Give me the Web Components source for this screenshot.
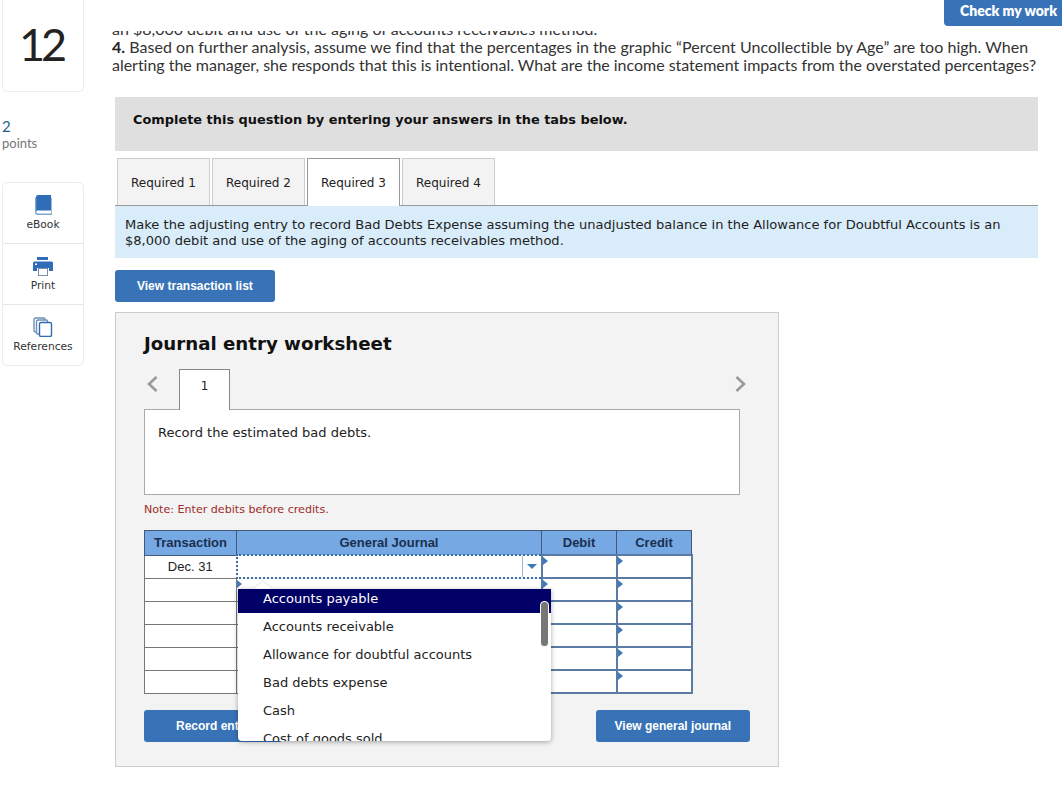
<!DOCTYPE html>
<html>
<head>
<meta charset="utf-8">
<title>Journal entry worksheet</title>
<style>
  html, body { margin: 0; padding: 0; background: #fff; }
  body { width: 1062px; height: 786px; overflow: hidden; position: relative; }
</style>
</head>
<body>
<quiz-page></quiz-page>

<script>
(function() {
  // small helper, every element is the same shape: style + markup in an open root
  function define(name, css, html) {
    customElements.define(name, class extends HTMLElement {
      constructor() {
        super();
        this.attachShadow({ mode: "open" });
        const template = document.createElement("template");
        template.innerHTML = "<style>" + css + "</style>" + html;
        this.shadowRoot.appendChild(template.content.cloneNode(true));
      }
    });
  }

  const VERDANA = '"DejaVu Sans", Verdana, sans-serif';
  const ARIAL = '"Liberation Sans", Arial, sans-serif';
  const PROXIMA = 'Lato, "Open Sans", sans-serif';

  define("action-button", `
    :host { display: inline-flex; }
    div {
      display: flex; align-items: center; justify-content: center;
      height: 32px; box-sizing: border-box;
      padding: 0 var(--pad, 22px);
      background: #3873b8; color: #fff; border-radius: 3px;
      font: bold 12px ${ARIAL};
    }
  `, `<div><slot></slot></div>`);

  define("tool-item", `
    :host {
      display: flex; flex-direction: column; align-items: center;
      height: 61px; box-sizing: border-box; padding-top: 12px;
      border-bottom: 1px solid #e6e6e6;
      color: #333;
    }
    :host(:last-child) { border-bottom: 0; }
    .icon { height: 20px; display: flex; }
    .label { margin-top: 3px; font: 10.700px/14px ${VERDANA}; }
  `, `<div class="icon"><slot name="icon"></slot></div><div class="label"><slot></slot></div>`);

  define("side-rail", `
    :host { display: block; width: 82px; margin-left: 2px; font-family: ${PROXIMA}; }
    .num {
      height: 92px; box-sizing: border-box;
      border: 1px solid #ececec; border-top: 0; border-radius: 0 0 5px 5px;
      display: flex; align-items: center; justify-content: center;
      font-size: 45px; font-weight: 400; color: #222; letter-spacing: -4px; padding: 0 4px 3px 0;
    }
    .pts { margin-top: 26px; height: 64px; color: #777; font-size: 13px; line-height: 17px; }
    .pts b { display: block; font-weight: 400; color: #1f5f8b; font-size: 15px; }
    .tools { border: 1px solid #ececec; border-radius: 5px; height: 184px; box-sizing: border-box; }
  `, `
    <div class="num">12</div>
    <div class="pts"><b>2</b>points</div>
    <div class="tools">
      <tool-item>
        <svg slot="icon" width="20" height="20" viewBox="0 0 20 20">
          <path d="M3 2.200C3 1 3.800 0 5 0h13v15.500H5c-1.200 0-2 .6-2 1.500z" fill="#2f6db8"/>
          <path d="M2 2.500v15C2 19 3 20 4.500 20H19V3h-.8v15.400H5c-1 0-1.700-.5-1.700-1.400V2.500z" fill="#7fa6d3"/>
        </svg>
        eBook
      </tool-item>
      <tool-item>
        <svg slot="icon" width="20" height="19" viewBox="0 0 20 19" style="margin-top:1px">
          <rect x="4" y="0" width="11" height="3" fill="#2f6db8"/>
          <path d="M1.500 4.500h17A1.500 1.500 0 0 1 20 6v8h-4v-3H4v3H0V6a1.500 1.500 0 0 1 1.500-1.500z" fill="#2f6db8"/>
          <rect x="2" y="6.500" width="2" height="1.500" fill="#fff"/>
          <rect x="5.500" y="11.500" width="9" height="7" fill="#fff" stroke="#7d8fa6"/>
        </svg>
        Print
      </tool-item>
      <tool-item>
        <svg slot="icon" width="20" height="20" viewBox="0 0 20 20" fill="#fff" stroke="#6f8fb5" stroke-width="1.400">
          <rect x="1" y="1" width="11" height="14" rx="1.500"/>
          <rect x="3.500" y="3" width="11" height="14" rx="1.500"/>
          <rect x="6.500" y="5.500" width="12" height="14" rx="1.500" stroke="#2f6db8"/>
        </svg>
        References
      </tool-item>
    </div>
  `);

  define("question-text", `
    :host {
      display: flex; flex-direction: column; justify-content: flex-end;
      height: 43px; overflow: hidden; margin: 31px 0 23px -3px;
      font: 16px/18px ${PROXIMA}; color: #333;
    }
    p { margin: 0; white-space: nowrap; flex: none; }
    b { color: #222; }
    .a { letter-spacing: .03px; }
    .b { letter-spacing: -.023px; }
  `, `
    <p>an $8,000 debit and use of the aging of accounts receivables method.</p>
    <p class="a"><b>4.</b> Based on further analysis, assume we find that the percentages in the graphic “Percent Uncollectible by Age” are too high. When</p>
    <p class="b">alerting the manager, she responds that this is intentional. What are the income statement impacts from the overstated percentages?</p>
  `);

  define("req-tabs", `
    :host { display: block; }
    .row {
      display: flex; gap: 2px; height: 48px; box-sizing: border-box;
      padding-left: 2px; border-bottom: 1px solid #999;
    }
    .tab {
      width: 93px; height: 47px; box-sizing: border-box; padding-top: 1px;
      border: 1px solid #ccc; border-bottom: 0;
      background: #f3f3f3; color: #222;
      display: flex; align-items: center; justify-content: center;
      font: 12px ${VERDANA};
    }
    .tab.on { background: #fff; border-color: #999; height: 48px; padding-top: 0; }
  `, `
    <div class="row">
      <div class="tab">Required 1</div>
      <div class="tab">Required 2</div>
      <div class="tab on">Required 3</div>
      <div class="tab">Required 4</div>
    </div>
  `);

  define("account-dropdown", `
    :host {
      position: absolute; left: 94px; top: 59px; z-index: 5;
      width: 313px; height: 152px;
      background: #fff; border-radius: 0 0 4px 4px;
      box-shadow: 0 1px 5px rgba(0,0,0,.35);
      font: 13px ${VERDANA}; color: #222;
    }
    .caret { position: absolute; left: 14px; top: -9px; display: block; }
    .list { height: 152px; overflow: hidden; border-radius: 0 0 4px 4px; }
    .inner { margin-top: -4px; }
    .item { height: 28px; line-height: 28px; padding-left: 25px; }
    .item.sel { background: #000066; color: #fff; }
    .bar {
      position: absolute; left: 302px; top: 12px; width: 9px; height: 46px;
      box-sizing: border-box; background: #777; border: 1px solid #fff; border-radius: 4px;
    }
  `, `
    <svg class="caret" width="22" height="9" viewBox="0 0 22 9"><path d="M1 9 11 .7 21 9z" fill="#fff" stroke="#e2e2e2"/></svg>
    <div class="list"><div class="inner">
      <div class="item sel">Accounts payable</div>
      <div class="item">Accounts receivable</div>
      <div class="item">Allowance for doubtful accounts</div>
      <div class="item">Bad debts expense</div>
      <div class="item">Cash</div>
      <div class="item">Cost of goods sold</div>
    </div></div>
    <div class="bar"></div>
  `);

  const flag = `<i class="flag"></i>`;
  function emptyRow(acct) {
    return `
    <tr>
      <td class="date"></td><td class="acct">${acct}</td>
      <td class="amt">${flag}</td><td class="amt">${flag}</td>
    </tr>`;
  }

  define("journal-table", `
    :host { display: block; position: relative; width: 547px; font: 13px ${ARIAL}; color: #222; }
    table { border-collapse: collapse; table-layout: fixed; width: 547px; }
    th {
      height: 23px; padding: 0; background: #76a9e3; color: #1a2f4f;
      border: 1px solid #44597a; font: bold 13px ${ARIAL};
    }
    td { height: 21px; padding: 0; background: #fff; position: relative; }
    td.date { border: 1px solid #777; text-align: center; }
    td.acct { border: 1px solid #777; }
    td.amt { border: 2px solid #5a7ba3; }
    td.focus { border: 2px dotted #3a6ea5; }
    .flag {
      position: absolute; left: 0; top: 1px; width: 0; height: 0;
      border-left: 5px solid #3f79b8;
      border-top: 4px solid transparent; border-bottom: 4px solid transparent;
    }
    .arrow {
      position: absolute; right: 0; top: 0; bottom: 0; width: 19px;
      display: flex; align-items: center; justify-content: center;
      border-left: 1px solid #9db5d2; box-sizing: border-box;
    }
    .arrow::after {
      content: ""; border-top: 5px solid #3f79b8;
      border-left: 5px solid transparent; border-right: 5px solid transparent;
    }
  `, `
    <table>
      <colgroup><col style="width:92px"><col style="width:305px"><col style="width:75px"><col style="width:75px"></colgroup>
      <tr><th>Transaction</th><th>General Journal</th><th>Debit</th><th>Credit</th></tr>
      <tr>
        <td class="date">Dec. 31</td>
        <td class="acct focus"><span class="arrow"></span></td>
        <td class="amt">${flag}</td><td class="amt">${flag}</td>
      </tr>
      ${emptyRow(flag)}${emptyRow("")}${emptyRow("")}${emptyRow("")}${emptyRow("")}
    </table>
    <account-dropdown></account-dropdown>
  `);

  define("journal-worksheet", `
    :host {
      display: block; width: 664px; height: 455px; box-sizing: border-box;
      margin-top: 10px; padding: 0 28px 0 28px;
      background: #f3f3f3; border: 1px solid #ccc;
      font-family: ${VERDANA}; color: #222;
    }
    h2 { margin: 19px 0 13px; font: bold 18.200px/24px ${VERDANA}; color: #111; white-space: nowrap; }
    .nav { display: flex; align-items: flex-start; height: 41px; position: relative; z-index: 1; }
    .nav svg { flex: none; }
    .prev { margin: 6px 21px 0 2px; }
    .num {
      width: 51px; height: 41px; box-sizing: border-box;
      border: 1px solid #888; border-bottom: 0; background: #fff;
      display: flex; justify-content: center; padding-top: 8px;
      font: 12px/16px ${VERDANA};
    }
    .next { margin: 6px 0 0 auto; position: relative; left: -3px; }
    .desc {
      margin-top: -1px; height: 86px; box-sizing: border-box;
      width: 596px; padding: 15px 13px; background: #fff; border: 1px solid #aaa;
      font: 13px/16px ${VERDANA};
    }
    .note { margin: 8px 0 13px; font: 11.100px/14px ${VERDANA}; color: #a12a2a; }
    .actions { display: flex; justify-content: space-between; margin-top: 16px; }
  `, `
    <h2>Journal entry worksheet</h2>
    <div class="nav">
      <svg class="prev" width="12" height="18" viewBox="0 0 12 18"><path d="M10.500 2 3 9l7.500 7" fill="none" stroke="#999" stroke-width="2.600"/></svg>
      <div class="num">1</div>
      <svg class="next" width="12" height="18" viewBox="0 0 12 18"><path d="M1.500 2 9 9l-7.500 7" fill="none" stroke="#999" stroke-width="2.600"/></svg>
    </div>
    <div class="desc">Record the estimated bad debts.</div>
    <div class="note">Note: Enter debits before credits.</div>
    <journal-table></journal-table>
    <div class="actions">
      <action-button style="--pad:32px">Record entry</action-button>
      <action-button style="--pad:19px">View general journal</action-button>
    </div>
  `);

  define("quiz-page", `
    :host { display: flex; width: 1062px; height: 786px; overflow: hidden; }
    main { width: 923px; margin-left: 31px; flex: none; }
    .check {
      position: absolute; right: 0; top: 0; width: 118px; height: 26px;
      box-sizing: border-box; padding: 0 5px 6px 0;
      display: flex; align-items: center; justify-content: flex-end;
      background: #3873b8; color: #fff; border-radius: 0 0 0 4px;
      font: 800 14px ${PROXIMA};
    }
    .banner {
      height: 54px; box-sizing: border-box; padding: 15px 18px 0;
      background: #dfdfdf; color: #111;
      font: bold 12.920px/16px ${VERDANA};
    }
    req-tabs { margin-top: 7px; }
    .info {
      height: 52px; box-sizing: border-box; padding: 11px 10px 0;
      background: #d9ecfa; color: #222;
      font: 13.050px/16px ${VERDANA};
    }
    .list-btn { margin-top: 12px; display: flex; }
  `, `
    <side-rail></side-rail>
    <main>
      <question-text></question-text>
      <div class="banner">Complete this question by entering your answers in the tabs below.</div>
      <req-tabs></req-tabs>
      <div class="info">Make the adjusting entry to record Bad Debts Expense assuming the unadjusted balance in the Allowance for Doubtful Accounts is an $8,000 debit and use of the aging of accounts receivables method.</div>
      <div class="list-btn"><action-button>View transaction list</action-button></div>
      <journal-worksheet></journal-worksheet>
    </main>
    <div class="check">Check my work</div>
  `);
})();
</script>
</body>
</html>
